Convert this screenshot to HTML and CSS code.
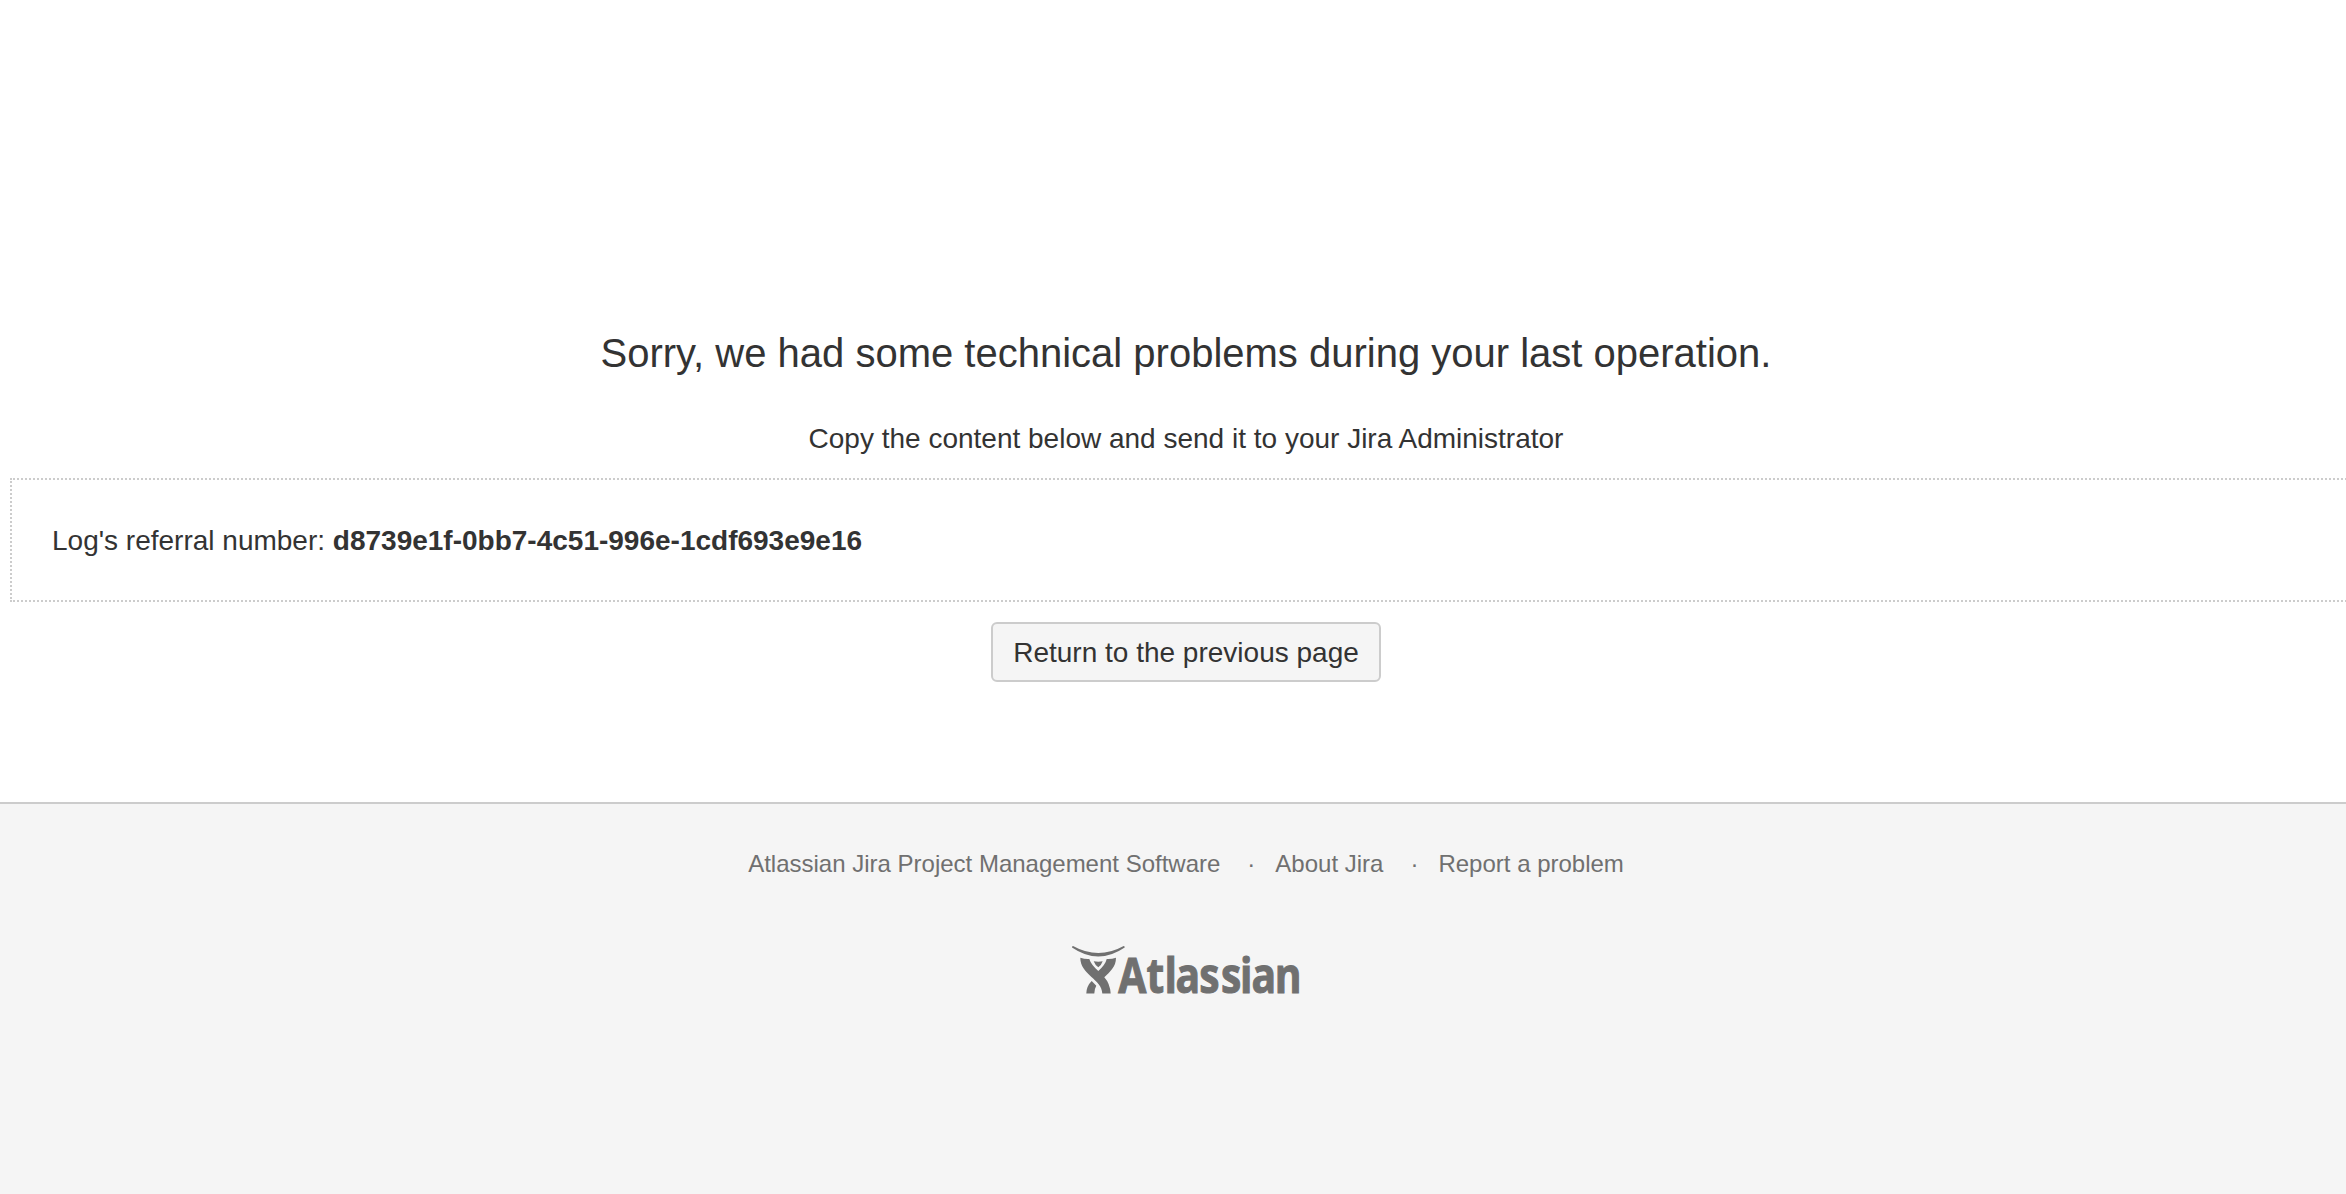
FILE: index.html
```
<!DOCTYPE html>
<html lang="en">
<head>
	<meta charset="utf-8">
	<title>Oops - an error has occurred</title>
	<link rel="stylesheet" href="styles.css">
</head>
<body>
	<div id="page">
		<main class="content">
			<h1 class="error-title">Sorry, we had some technical problems during your last operation.</h1>
			<p class="error-hint">Copy the content below and send it to your Jira Administrator</p>
			<div class="log-box">Log's referral number: <strong>d8739e1f-0bb7-4c51-996e-1cdf693e9e16</strong></div>
			<button class="aui-button" type="button">Return to the previous page</button>
		</main>
		<footer class="footer">
			<ul class="footer-links">
				<li>Atlassian Jira Project Management Software</li>
				<li>About Jira</li>
				<li>Report a problem</li>
			</ul>
			<svg class="footer-logo" width="228" height="54" viewBox="0 0 228 54" role="img" aria-label="Atlassian">
				<path d="M1 2Q26.300 16 51.700 2Q53 2 52.700 3.500Q26.300 21.500 0 3.500Q-.2 2 1 2Z"/>
				<path d="M8.300 13.700Q13 15.300 17.300 15Q19 20.500 26.300 27Q33.500 20.500 34.700 15Q39.500 15.300 44 13.700C44 23 38 27.500 32.300 33.300Q38 39.500 38.700 49.500H30.300C30 35 8.300 31 8.300 13.700Z"/>
				<path d="M21.700 17.300Q26.300 18 30.700 17.300Q29.500 21 26.300 23.300Q23 21 21.700 17.300Z"/>
				<path d="M19.700 37L24.300 41.700Q22.300 45 22.300 49.500H14.300Q14.500 42 19.700 37Z"/>
				<text class="logo-text" transform="scale(.85 1)" x="54.500 87.600 108.800 121.900 149.800 175.300 197.700 211.300 238.500" y="49.300">Atlassian</text>
			</svg>
		</footer>
	</div>
</body>
</html>
```

FILE: styles.css
```
html {
	overflow:hidden;
}

body {
	margin:0;
	color:#333333;
	background:#ffffff;
	font-family:"Liberation Sans", Arial, sans-serif;
	font-size:28px;
	line-height:40px;
}

/* wider than the window, cut off on the right */
#page {
	width:2372px;
	height:1194px;
	display:flex;
	flex-direction:column;
}

.content {
	height:802px;
	box-sizing:border-box;
	padding:325px 10px 0;
	display:flex;
	flex-direction:column;
	align-items:center;
}

.error-title {
	margin:0;
	font-size:40px;
	font-weight:normal;
	line-height:56px;
}

.error-hint {
	margin:38px 0 19px;
}

.log-box {
	align-self:stretch;
	padding:41px 40px 39px;
	border:2px dotted #cccccc;
}

.aui-button {
	height:60px;
	margin-top:20px;
	padding:2px 20px 0;
	border:2px solid #cccccc;
	border-radius:6px;
	background:#f5f5f5;
	color:#333333;
	font:inherit;
}

.footer {
	flex:1;
	border-top:2px solid #cccccc;
	background:#f5f5f5;
	color:#707070;
	font-size:24px;
	display:flex;
	flex-direction:column;
	align-items:center;
}

.footer-links {
	margin:40px 0 60px;
	padding:0;
	list-style:none;
	display:flex;
}

.footer-links li + li::before {
	content:"\00b7";
	margin:0 20px 0 27px;
}

.footer-logo {
	fill:#707070;
	overflow:visible;
}

.logo-text {
	font-family:"Open Sans", sans-serif;
	font-size:48px;
	font-weight:bold;
	stroke:#707070;
	stroke-width:1px;
}
```
